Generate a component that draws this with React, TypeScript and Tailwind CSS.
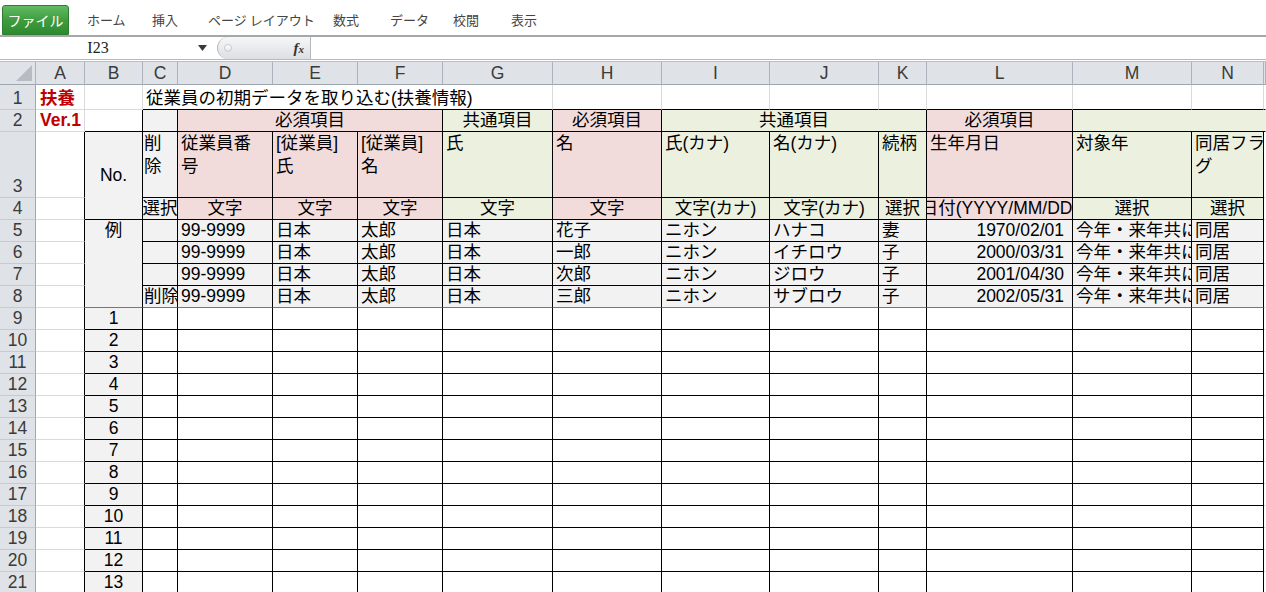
import type { ReactNode } from "react";

// border presets (each cell owns its right and bottom edge)
const GRID = "border-r-[#dadada] border-b-[#dadada]";
const EDGE = "border-r-black border-b-[#dadada]";
const BOX = "border-r-black border-b-black";
const HEAD = "bg-[#dfe3e8] border-r-[#abb2bb] border-b-[#9ea6b0] justify-center items-end text-[#3b3b3b]";
const ROWHEAD = "bg-[#dfe3e8] border-r-[#9ea6b0] border-b-[#c6cbd1] justify-center items-end text-[#3b3b3b]";
const PINK = "bg-[#f2dcdb]";
const GREEN = "bg-[#ebf1de]";
const GRAY = "bg-[#f2f2f2]";

const LETTERS = ["A", "B", "C", "D", "E", "F", "G", "H", "I", "J", "K", "L", "M", "N"];

const examples = [
  { del: "", name: "花子", kana: "ハナコ", rel: "妻", birth: "1970/02/01" },
  { del: "", name: "一郎", kana: "イチロウ", rel: "子", birth: "2000/03/31" },
  { del: "", name: "次郎", kana: "ジロウ", rel: "子", birth: "2001/04/30" },
  { del: "削除", name: "三郎", kana: "サブロウ", rel: "子", birth: "2002/05/31" },
];

const tabs = [
  { label: "ホーム", w: "w-[65px]" },
  { label: "挿入", w: "w-[56px]" },
  { label: "ページ レイアウト", w: "w-[125px]" },
  { label: "数式", w: "w-[57px]" },
  { label: "データ", w: "w-[63px]" },
  { label: "校閲", w: "w-[58px]" },
  { label: "表示", w: "w-[60px]" },
];

function Cell({ className = "", children }: { className?: string; children?: ReactNode }) {
  return (
    <div className={`flex min-w-0 overflow-hidden whitespace-nowrap border-r border-b leading-[21px] ${className}`}>
      {children}
    </div>
  );
}

const Ribbon = () => (
  <div className="flex h-[37px] items-start border-b-2 border-b-[#a7a7a7] font-['Noto_Sans_CJK_JP',sans-serif] text-[13px] text-[#444]">
    <div className="ml-[2px] mt-[5px] flex h-[30px] w-[67px] items-center justify-center rounded-t-[3px] border border-[#2f7d2f] bg-gradient-to-b from-[#62bb62] via-[#3f9d3f] to-[#2e8a2e] text-[14px] text-white">
      ファイル
    </div>
    <div className="ml-[18px] flex h-full items-center pt-[4px]">
      {tabs.map((t) => (
        <span key={t.label} className={t.w}>
          {t.label}
        </span>
      ))}
    </div>
  </div>
);

const FormulaBar = () => (
  <div className="flex h-[23px] border-b border-b-[#b8b8b8] bg-white">
    <div className="flex w-[217px] items-center">
      <span className="w-[196px] text-center font-['Liberation_Serif',serif] text-[16px] text-[#222]">I23</span>
      <svg width="9" height="6" viewBox="0 0 9 6" className="ml-[2px]">
        <path d="M0 0h9L4.5 6z" fill="#3a3a3a" />
      </svg>
    </div>
    <div className="flex w-[94px] items-center rounded-l-[11px] border-l border-r border-l-[#b5b9be] border-r-[#b5b9be] bg-gradient-to-b from-[#f6f7f8] to-[#dcdfe3]">
      <span className="ml-[6px] h-[8px] w-[8px] rounded-full border border-[#c8cbcf] bg-gradient-to-b from-white to-[#e4e6e9]" />
      <span className="ml-auto mr-[6px] font-['Liberation_Serif',serif] text-[15px] font-bold italic text-[#333]">
        f<span className="text-[11px]">x</span>
      </span>
    </div>
    <div className="flex-1" />
  </div>
);

const Sheet = () => (
  <div className="grid grid-cols-[36px_49px_58px_35px_95px_85px_85px_110px_109px_108px_109px_48px_146px_119px_72px_1fr] grid-rows-[23px_25px_22px_66px_22px_repeat(17,22px)] border-t border-t-[#b9bfc7] font-['Liberation_Sans','Noto_Sans_CJK_JP',sans-serif] text-[17.5px] text-black">
    {/* column headers */}
    <Cell className="bg-[#dfe3e8] border-r-[#abb2bb] border-b-[#9ea6b0] items-end justify-end">
      <svg width="16" height="16" viewBox="0 0 16 16" className="mb-[3px] mr-[3px]">
        <path d="M16 0V16H0Z" fill="#b7bcc3" />
      </svg>
    </Cell>
    {LETTERS.map((l) => (
      <Cell key={l} className={HEAD}>
        {l}
      </Cell>
    ))}
    <Cell className={HEAD} />

    {/* row 1 */}
    <Cell className={ROWHEAD}>1</Cell>
    <Cell className={`${GRID} items-end pl-[4px] font-bold text-[#c00000]`}>扶養</Cell>
    <Cell className={GRID} />
    <Cell className="col-span-5 border-r-[#dadada] border-b-black items-end pl-[3px]">
      従業員の初期データを取り込む(扶養情報)
    </Cell>
    <Cell className="border-r-[#dadada] border-b-black" />
    <Cell className="border-r-[#dadada] border-b-black" />
    <Cell className="border-r-[#dadada] border-b-black" />
    <Cell className="border-r-[#dadada] border-b-black" />
    <Cell className="border-r-[#dadada] border-b-black" />
    <Cell className="border-r-[#dadada] border-b-black" />
    <Cell className="border-r-[#dadada] border-b-black" />
    <Cell className="border-r-transparent border-b-black" />

    {/* row 2 */}
    <Cell className={ROWHEAD}>2</Cell>
    <Cell className={`${GRID} items-end pl-[4px] font-bold text-[#c00000]`}>Ver.1</Cell>
    <Cell className={BOX} />
    <Cell className={`${GRAY} ${BOX}`} />
    <Cell className={`col-span-3 ${PINK} ${BOX} items-end justify-center`}>必須項目</Cell>
    <Cell className={`${GREEN} ${BOX} items-end justify-center`}>共通項目</Cell>
    <Cell className={`${PINK} ${BOX} items-end justify-center`}>必須項目</Cell>
    <Cell className={`col-span-3 ${GREEN} ${BOX} items-end justify-center`}>共通項目</Cell>
    <Cell className={`${PINK} ${BOX} items-end justify-center`}>必須項目</Cell>
    <Cell className={`col-span-3 ${GREEN} border-r-transparent border-b-black`} />

    {/* row 3 */}
    <Cell className={ROWHEAD}>3</Cell>
    <Cell className={EDGE} />
    <Cell className={`row-span-2 ${GRAY} ${BOX} items-center justify-center`}>No.</Cell>
    <Cell className={`${GRAY} ${BOX} items-start pl-[1px] leading-[23px]`}>
      <span>
        削<br />除
      </span>
    </Cell>
    <Cell className={`${PINK} ${BOX} items-start pl-[3px] leading-[23px]`}>
      <span>
        従業員番<br />号
      </span>
    </Cell>
    <Cell className={`${PINK} ${BOX} items-start pl-[3px] leading-[23px]`}>
      <span>
        [従業員]<br />氏
      </span>
    </Cell>
    <Cell className={`${PINK} ${BOX} items-start pl-[3px] leading-[23px]`}>
      <span>
        [従業員]<br />名
      </span>
    </Cell>
    <Cell className={`${GREEN} ${BOX} items-start pl-[3px] leading-[23px]`}>氏</Cell>
    <Cell className={`${PINK} ${BOX} items-start pl-[3px] leading-[23px]`}>名</Cell>
    <Cell className={`${GREEN} ${BOX} items-start pl-[3px] leading-[23px]`}>氏(カナ)</Cell>
    <Cell className={`${GREEN} ${BOX} items-start pl-[3px] leading-[23px]`}>名(カナ)</Cell>
    <Cell className={`${GREEN} ${BOX} items-start pl-[3px] leading-[23px]`}>続柄</Cell>
    <Cell className={`${PINK} ${BOX} items-start pl-[3px] leading-[23px]`}>生年月日</Cell>
    <Cell className={`${GREEN} ${BOX} items-start pl-[3px] leading-[23px]`}>対象年</Cell>
    <Cell className={`${GREEN} ${BOX} items-start pl-[3px] leading-[23px]`}>
      <span>
        同居フラ<br />グ
      </span>
    </Cell>
    <Cell className="border-r-transparent border-b-[#dadada]" />

    {/* row 4 */}
    <Cell className={ROWHEAD}>4</Cell>
    <Cell className={EDGE} />
    <Cell className={`${GRAY} ${BOX} items-end justify-center`}>選択</Cell>
    <Cell className={`${PINK} ${BOX} items-end justify-center`}>文字</Cell>
    <Cell className={`${PINK} ${BOX} items-end justify-center`}>文字</Cell>
    <Cell className={`${PINK} ${BOX} items-end justify-center`}>文字</Cell>
    <Cell className={`${GREEN} ${BOX} items-end justify-center`}>文字</Cell>
    <Cell className={`${PINK} ${BOX} items-end justify-center`}>文字</Cell>
    <Cell className={`${GREEN} ${BOX} items-end justify-center`}>文字(カナ)</Cell>
    <Cell className={`${GREEN} ${BOX} items-end justify-center`}>文字(カナ)</Cell>
    <Cell className={`${GREEN} ${BOX} items-end justify-center`}>選択</Cell>
    <Cell className={`${PINK} ${BOX} items-end justify-center`}>日付(YYYY/MM/DD)</Cell>
    <Cell className={`${GREEN} ${BOX} items-end justify-center`}>選択</Cell>
    <Cell className={`${GREEN} ${BOX} items-end justify-center`}>選択</Cell>
    <Cell className="border-r-transparent border-b-[#dadada]" />

    {/* rows 5-8: examples */}
    {examples.map((r, i) => {
      const bb = i === 3 ? "border-r-black border-b-[#777]" : BOX;
      return [
        <Cell key={`h${i}`} className={ROWHEAD}>
          {i + 5}
        </Cell>,
        <Cell key={`a${i}`} className={EDGE} />,
        i === 0 ? (
          <Cell key="b" className={`row-span-4 ${GRAY} border-r-black border-b-[#777] items-start justify-center`}>
            例
          </Cell>
        ) : null,
        <Cell key={`c${i}`} className={`${GRAY} ${bb} items-end pl-[1px]`}>
          {r.del}
        </Cell>,
        <Cell key={`d${i}`} className={`${GRAY} ${bb} items-end pl-[3px]`}>
          99-9999
        </Cell>,
        <Cell key={`e${i}`} className={`${GRAY} ${bb} items-end pl-[3px]`}>
          日本
        </Cell>,
        <Cell key={`f${i}`} className={`${GRAY} ${bb} items-end pl-[3px]`}>
          太郎
        </Cell>,
        <Cell key={`g${i}`} className={`${GRAY} ${bb} items-end pl-[3px]`}>
          日本
        </Cell>,
        <Cell key={`hh${i}`} className={`${GRAY} ${bb} items-end pl-[3px]`}>
          {r.name}
        </Cell>,
        <Cell key={`i${i}`} className={`${GRAY} ${bb} items-end pl-[3px]`}>
          ニホン
        </Cell>,
        <Cell key={`j${i}`} className={`${GRAY} ${bb} items-end pl-[3px]`}>
          {r.kana}
        </Cell>,
        <Cell key={`k${i}`} className={`${GRAY} ${bb} items-end pl-[3px]`}>
          {r.rel}
        </Cell>,
        <Cell key={`l${i}`} className={`${GRAY} ${bb} items-end justify-end pr-[8px]`}>
          {r.birth}
        </Cell>,
        <Cell key={`m${i}`} className={`${GRAY} ${bb} items-end pl-[3px]`}>
          今年・来年共に同居
        </Cell>,
        <Cell key={`n${i}`} className={`${GRAY} ${bb} items-end pl-[3px]`}>
          同居
        </Cell>,
        <Cell key={`o${i}`} className="border-r-transparent border-b-[#dadada]" />,
      ];
    })}

    {/* rows 9-21: input rows */}
    {Array.from({ length: 13 }, (_, i) => [
      <Cell key={`rh${i}`} className={ROWHEAD}>
        {i + 9}
      </Cell>,
      <Cell key={`ra${i}`} className={EDGE} />,
      <Cell key={`rb${i}`} className={`${GRAY} ${BOX} items-end justify-center`}>
        {i + 1}
      </Cell>,
      ...Array.from({ length: 12 }, (_, j) => <Cell key={`r${i}-${j}`} className={BOX} />),
      <Cell key={`ro${i}`} className="border-r-transparent border-b-[#dadada]" />,
    ])}
  </div>
);

export default function App() {
  return (
    <div className="h-[592px] w-[1266px] overflow-hidden bg-white">
      <Ribbon />
      <FormulaBar />
      <div className="h-[1px]" />
      <Sheet />
    </div>
  );
}
